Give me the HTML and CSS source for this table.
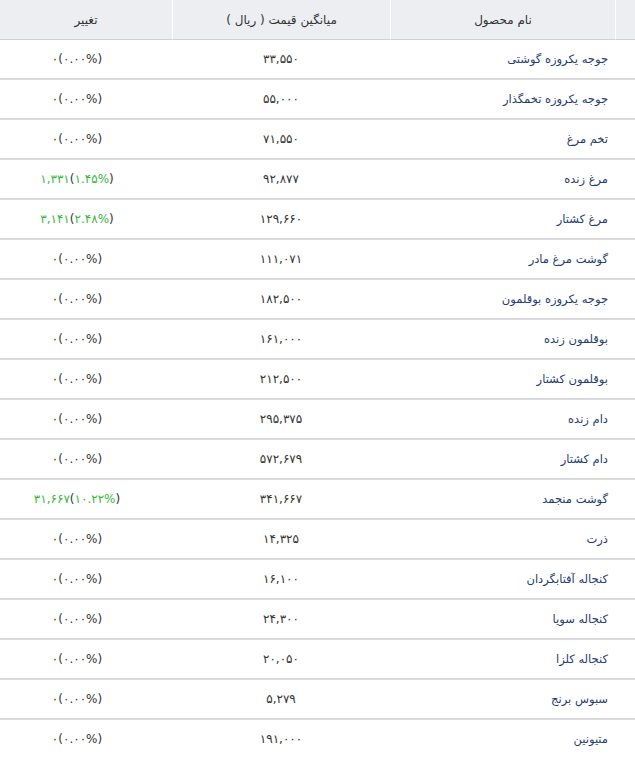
FILE: index.html
```html
<!DOCTYPE html>
<html lang="fa" dir="rtl">
<head>
<meta charset="utf-8">
<title>قیمت محصولات</title>
<link rel="stylesheet" href="styles.css">
</head>
<body>
<table class="prices">
  <thead>
    <tr>
      <th class="c-idx"></th>
      <th class="c-name">نام محصول</th>
      <th class="c-price">میانگین قیمت ( ریال )</th>
      <th class="c-chg">تغییر</th>
    </tr>
  </thead>
  <tbody>
    <tr><td></td><td class="name">جوجه یکروزه گوشتی</td><td class="price">۳۳,۵۵۰</td><td class="chg"><span class="v">۰(۰.۰۰%)</span></td></tr>
    <tr><td></td><td class="name">جوجه یکروزه تخمگذار</td><td class="price">۵۵,۰۰۰</td><td class="chg"><span class="v">۰(۰.۰۰%)</span></td></tr>
    <tr><td></td><td class="name">تخم مرغ</td><td class="price">۷۱,۵۵۰</td><td class="chg"><span class="v">۰(۰.۰۰%)</span></td></tr>
    <tr><td></td><td class="name">مرغ زنده</td><td class="price">۹۲,۸۷۷</td><td class="chg"><span class="v"><span class="up">۱,۳۳۱</span>(<span class="up">۱.۴۵%</span>)</span></td></tr>
    <tr><td></td><td class="name">مرغ کشتار</td><td class="price">۱۲۹,۶۶۰</td><td class="chg"><span class="v"><span class="up">۳,۱۴۱</span>(<span class="up">۲.۴۸%</span>)</span></td></tr>
    <tr><td></td><td class="name">گوشت مرغ مادر</td><td class="price">۱۱۱,۰۷۱</td><td class="chg"><span class="v">۰(۰.۰۰%)</span></td></tr>
    <tr><td></td><td class="name">جوجه یکروزه بوقلمون</td><td class="price">۱۸۲,۵۰۰</td><td class="chg"><span class="v">۰(۰.۰۰%)</span></td></tr>
    <tr><td></td><td class="name">بوقلمون زنده</td><td class="price">۱۶۱,۰۰۰</td><td class="chg"><span class="v">۰(۰.۰۰%)</span></td></tr>
    <tr><td></td><td class="name">بوقلمون کشتار</td><td class="price">۲۱۲,۵۰۰</td><td class="chg"><span class="v">۰(۰.۰۰%)</span></td></tr>
    <tr><td></td><td class="name">دام زنده</td><td class="price">۲۹۵,۳۷۵</td><td class="chg"><span class="v">۰(۰.۰۰%)</span></td></tr>
    <tr><td></td><td class="name">دام کشتار</td><td class="price">۵۷۲,۶۷۹</td><td class="chg"><span class="v">۰(۰.۰۰%)</span></td></tr>
    <tr><td></td><td class="name">گوشت منجمد</td><td class="price">۳۴۱,۶۶۷</td><td class="chg"><span class="v"><span class="up">۳۱,۶۶۷</span>(<span class="up">۱۰.۲۲%</span>)</span></td></tr>
    <tr><td></td><td class="name">ذرت</td><td class="price">۱۴,۳۲۵</td><td class="chg"><span class="v">۰(۰.۰۰%)</span></td></tr>
    <tr><td></td><td class="name">کنجاله آفتابگردان</td><td class="price">۱۶,۱۰۰</td><td class="chg"><span class="v">۰(۰.۰۰%)</span></td></tr>
    <tr><td></td><td class="name">کنجاله سویا</td><td class="price">۲۴,۳۰۰</td><td class="chg"><span class="v">۰(۰.۰۰%)</span></td></tr>
    <tr><td></td><td class="name">کنجاله کلزا</td><td class="price">۲۰,۰۵۰</td><td class="chg"><span class="v">۰(۰.۰۰%)</span></td></tr>
    <tr><td></td><td class="name">سبوس برنج</td><td class="price">۵,۲۷۹</td><td class="chg"><span class="v">۰(۰.۰۰%)</span></td></tr>
    <tr><td></td><td class="name">متیونین</td><td class="price">۱۹۱,۰۰۰</td><td class="chg"><span class="v">۰(۰.۰۰%)</span></td></tr>
  </tbody>
</table>
</body>
</html>
```
FILE: styles.css
```css
html, body {
  margin: 0;
  padding: 0;
  background: #ffffff;
}
body {
  font-family: "DejaVu Sans", "Noto Sans", sans-serif;
  font-size: 12px;
  color: #333333;
}
.prices {
  width: 635px;
  border-collapse: separate;
  border-spacing: 0;
  table-layout: fixed;
}
.prices th {
  box-sizing: border-box;
  height: 40px;
  padding: 0;
  background: #eceef2;
  font-weight: normal;
  font-size: 12px;
  color: #333333;
  text-align: center;
  border-left: 1px solid #ffffff;
  border-bottom: 1px solid #cfd1d4;
}
.prices th.c-chg {
  border-left: none;
}
.c-idx { width: 20px; }
.c-name { width: 225px; }
.c-price { width: 218px; }
.c-chg { width: 172px; }
.prices td {
  box-sizing: border-box;
  height: 40px;
  padding: 0;
  border-bottom: 2px solid #d9d9d9;
  vertical-align: middle;
}
.name {
  text-align: right;
  padding-right: 7px !important;
  font-size: 11.5px;
  color: #1f3c72;
}
.price {
  text-align: center;
  color: #333333;
}
.chg {
  text-align: center;
  padding-right: 18px !important;
}
.v {
  direction: ltr;
  unicode-bidi: isolate;
  display: inline-block;
  color: #333333;
}
.up {
  color: #35b93a;
}
```
